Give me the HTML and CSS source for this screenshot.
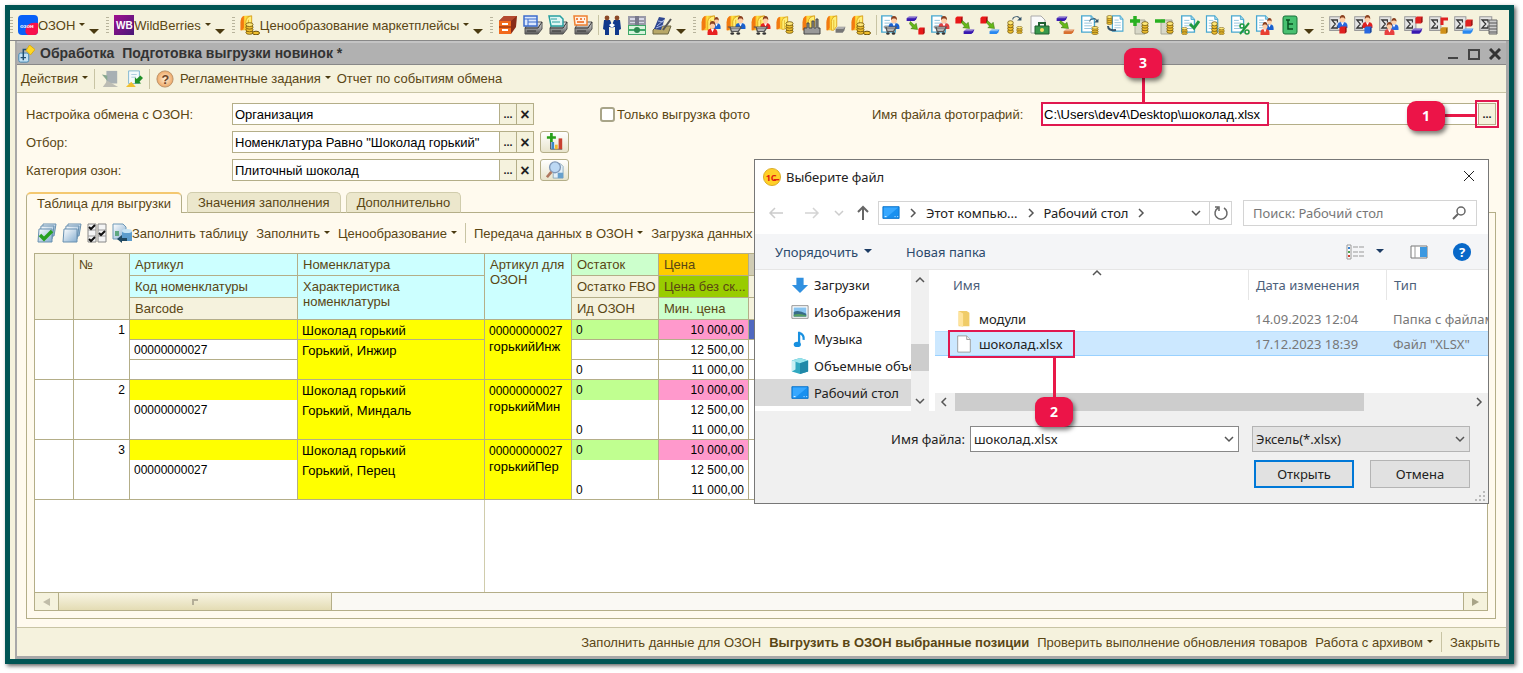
FILE: index.html
```
<!DOCTYPE html>
<html lang="ru">
<head>
	<meta charset="UTF-8">
	<title>Подготовка выгрузки новинок</title>
	<link rel="stylesheet" href="styles.css">
</head>
<body>

<!-- icon parts and icons, all on a 20x20 grid -->
<svg class="sprite" aria-hidden="true">
	<defs>
		<linearGradient id="gold" x2="1"><stop offset="0" stop-color="#f08010"/><stop offset=".45" stop-color="#ffe040"/><stop offset="1" stop-color="#c88808"/></linearGradient>
		<linearGradient id="metal" x2="0" y2="1"><stop offset="0" stop-color="#eeeeee"/><stop offset="1" stop-color="#555555"/></linearGradient>
		<linearGradient id="glass" x2="1" y2="1"><stop offset="0" stop-color="#ffffff"/><stop offset="1" stop-color="#86aed0"/></linearGradient>
		<linearGradient id="wb" x2="1" y2="1"><stop offset="0" stop-color="#a01090"/><stop offset="1" stop-color="#481878"/></linearGradient>
		<radialGradient id="orange"><stop offset="0" stop-color="#fff0d8"/><stop offset="1" stop-color="#eda765"/></radialGradient>
	</defs>
	<symbol id="box" viewBox="0 0 20 20" preserveAspectRatio="none"><path d="M1 9q0-7 6-8h11v13l-5 5H1z" fill="url(#gold)"/><path d="M1 9q0-6 5-8v15l-3 3H1z" fill="#f27a10"/><path d="M9 8q1-6 9-7v13l-5 5H9z" fill="#fff078" stroke="#d89810"/><path d="M13 6v12" stroke="#e0a818"/></symbol>
	<symbol id="man" viewBox="0 0 20 20" preserveAspectRatio="none"><path d="M1 20q-1-9 5-9h8q6 1 5 9z" fill="currentColor"/><path d="M7 11l3 5 3-5z" fill="#ffffff"/><circle cx="10" cy="6" r="5" fill="#ffcfa8"/><path d="M5 6q0-6 5-6t5 6l-3-2H8z" fill="#8a4020"/></symbol>
	<symbol id="cart" viewBox="0 0 20 20" preserveAspectRatio="none"><path d="M1 4h3l2 9h9l4-9z" fill="#dddddd" stroke="#555555" stroke-width="2"/><path d="M5 7h12M6 10h10" stroke="#555555"/><circle cx="7" cy="17" r="2.5" fill="#333333"/><circle cx="15" cy="17" r="2.5" fill="#333333"/></symbol>
	<symbol id="coins" viewBox="0 0 20 20" preserveAspectRatio="none"><g fill="#f0c030" stroke="#6a5008" stroke-width="1.4"><ellipse cx="10" cy="16" rx="8" ry="3"/><ellipse cx="10" cy="12" rx="8" ry="3"/><ellipse cx="10" cy="8" rx="8" ry="3"/><ellipse cx="10" cy="4" rx="8" ry="3" fill="#ffe878"/></g></symbol>
	<symbol id="doc" viewBox="0 0 20 20" preserveAspectRatio="none"><path d="M2 1h11l4 4v14H2z" fill="#ffffff" stroke="#48a8d0" stroke-width="1.6"/><path d="M13 1v4h4" fill="#9cd4ea" stroke="#48a8d0"/><path d="M5 6h6M5 9h9M5 12h9M5 15h9" stroke="#88bdd8"/></symbol>
	<symbol id="sigma" viewBox="0 0 20 20" preserveAspectRatio="none"><path d="M1 1h16v17H1z" fill="#e4e4e4" stroke="#999999" stroke-width="1.4"/><path d="M12 8V5H4l5 5-5 5h8v-3" fill="none" stroke="#333333" stroke-width="1.6"/></symbol>
	<symbol id="slab" viewBox="0 0 20 20" preserveAspectRatio="none"><path d="M1 9l4-5h14l-2 8-3 5H1z" fill="currentColor"/><path d="M1 9l4-5h14l-4 5z" fill="#ffffff" opacity=".4"/></symbol>
	<symbol id="cube" viewBox="0 0 20 20" preserveAspectRatio="none"><path d="M1 5l4-4h14v14l-4 4H1z" fill="currentColor"/><path d="M15 5l4-4v14l-4 4z" fill="#000000" opacity=".3"/></symbol>
	<symbol id="arrow" viewBox="0 0 20 20" preserveAspectRatio="none"><path d="M3 1l9 8 4-4 3 14-15-2 4-3-7-8z" fill="#66b818" stroke="#2c6808"/></symbol>
	<symbol id="turn" viewBox="0 0 20 20" preserveAspectRatio="none"><path d="M3 10q1-8 10-6" fill="none" stroke="#34536a" stroke-width="2"/><path d="M19 4v8h-8z" fill="#34536a"/><path d="M12 4q3 0 4 5" fill="none" stroke="#34536a" stroke-width="2"/></symbol>
	<symbol id="printer" viewBox="0 0 20 20"><path d="M2 13l4-6h13v7l-4 5H2z" fill="url(#metal)" stroke="#555555"/><path d="M2 13h13l4-6M4 16h9" fill="none" stroke="#333333"/></symbol>

	<symbol id="prices" viewBox="0 0 20 20"><use href="#box" width="13" height="16"/><use href="#coins" x="5" y="7" width="9" height="13"/><ellipse cx="16" cy="18" rx="3.5" ry="1.8" fill="#f0c030" stroke="#6a5008"/></symbol>
	<symbol id="cabinet" viewBox="0 0 20 20"><path d="M1 6l5-5h13l-1 11-5 7H1z" fill="#8a2c18"/><path d="M1 6h12v13H1z" fill="#f26a1c"/><path d="M1 6l5-5h13l-6 5z" fill="#b44a30"/><path d="M1 12h12" stroke="#802008"/><path d="M4 9h6M4 15h6" stroke="#ffffff" stroke-width="2"/></symbol>
	<symbol id="print-blue" viewBox="0 0 20 20"><use href="#printer"/><path d="M1 1h13v10H1z" fill="#dce8fc" stroke="#3c6ccc" stroke-width="1.5"/><path d="M1 4h13M5 4v7M5 7h9" stroke="#3c6ccc"/></symbol>
	<symbol id="print-teal" viewBox="0 0 20 20"><use href="#printer"/><path d="M1 1h11l3 3v7H3z" fill="#e0f6f4" stroke="#28a0a0" stroke-width="1.5"/><path d="M3 4h6M4 7h8" stroke="#28a0a0"/></symbol>
	<symbol id="print-orange" viewBox="0 0 20 20"><use href="#printer"/><path d="M1 1h13v9H2z" fill="#fff0e4" stroke="#ee8030" stroke-width="1.5"/><path d="M3 4h2m2 0h2m2 0h1M4 7h7" stroke="#ee6010" stroke-width="1.5"/></symbol>
	<symbol id="partners" viewBox="0 0 20 20"><path d="M2 5l6 0 2 5 2-5h6l1 9-2 1v5h-4v-8h-1l-2 1-2-1H7v8H3v-5l-2-1z" fill="#10388c"/><circle cx="5" cy="3" r="2.4" fill="#8c4a28"/><circle cx="15" cy="3" r="2.4" fill="#8c4a28"/><path d="M7 10l3-2 3 2-3 3z" fill="#ffffff"/></symbol>
	<symbol id="cash" viewBox="0 0 20 20"><path d="M1 1h18v9H1z" fill="#9a9aa8"/><path d="M3 3h14v2H3zM3 7h14v1H3z" fill="#d8d8e8"/><path d="M8 1h4v9H8z" fill="#78788c"/><path d="M1 10h18v10H1z" fill="#40a868"/><path d="M2 11h16v3H2zm0 5h16v3H2z" fill="#d8f4dc"/><circle cx="10" cy="15" r="3" fill="#2c8850"/></symbol>
	<symbol id="desk" viewBox="0 0 20 20"><path d="M1 15l4-4h14l-3 8H1z" fill="#b8a868" stroke="#6a6440"/><path d="M2 14L7 2l6 1-4 12z" fill="#304890"/><path d="M5 11l7-6M4 13l8-3M6 6l6 1" stroke="#a8b8e8"/><path d="M11 15l8-11" stroke="#555555" stroke-width="2"/></symbol>
	<symbol id="box-people" viewBox="0 0 20 20"><use href="#box" width="15" height="16"/><use href="#man" x="11" y="2" width="9" height="12" color="#1860d0"/><use href="#man" x="6" y="6" width="11" height="14" color="#e82020"/></symbol>
	<symbol id="box-cart-blue" viewBox="0 0 20 20"><use href="#box" width="15" height="16"/><use href="#man" x="9" y="1" width="11" height="13" color="#1860d0"/><use href="#cart" x="1" y="10" width="15" height="10"/></symbol>
	<symbol id="box-cart-red" viewBox="0 0 20 20"><use href="#box" width="15" height="16"/><use href="#man" x="9" y="1" width="11" height="13" color="#e82020"/><use href="#cart" x="2" y="10" width="15" height="10"/></symbol>
	<symbol id="box-coins" viewBox="0 0 20 20"><use href="#box" y="1" width="13" height="14"/><use href="#coins" x="9" y="6" width="9" height="13"/></symbol>
	<symbol id="box-factory" viewBox="0 0 20 20"><use href="#box" x="1" width="14" height="16"/><path d="M3 19v-6h3V8h2v5h3V6h2v7h2V4h2v9h2v6z" fill="#999999" stroke="#444444"/></symbol>
	<symbol id="box-slab" viewBox="0 0 20 20"><use href="#box" width="12" height="16"/><use href="#slab" x="9" y="10" width="11" height="9" color="#777777"/></symbol>
	<symbol id="doc-blue" viewBox="0 0 20 20"><use href="#doc" width="18" height="18"/><use href="#man" x="8" y="1" width="12" height="13" color="#1860d0"/><use href="#cart" x="3" y="10" width="14" height="10"/></symbol>
	<symbol id="doc-red" viewBox="0 0 20 20"><use href="#doc" width="18" height="18"/><use href="#man" x="8" y="1" width="12" height="13" color="#e04040"/><use href="#cart" x="3" y="10" width="14" height="10"/></symbol>
	<symbol id="move-out" viewBox="0 0 20 20"><use href="#slab" x="1" width="12" height="7" color="#3818b0"/><use href="#arrow" x="4" y="6" width="9" height="9"/><use href="#cube" x="13" y="12" width="7" height="8" color="#e81818"/></symbol>
	<symbol id="move-in" viewBox="0 0 20 20"><use href="#cube" y="1" width="8" height="8" color="#e81818"/><use href="#arrow" x="6" y="5" width="9" height="9"/><use href="#slab" x="8" y="13" width="12" height="7" color="#3818b0"/></symbol>
	<symbol id="move-in-blue" viewBox="0 0 20 20"><use href="#cube" y="1" width="8" height="8" color="#e81818"/><use href="#arrow" x="6" y="5" width="9" height="9"/><use href="#slab" x="9" y="13" width="11" height="7" color="#2888f0"/></symbol>
	<symbol id="coins-turn" viewBox="0 0 20 20"><use href="#coins" x="2" y="5" width="7" height="14"/><use href="#coins" x="11" y="11" width="7" height="8"/><use href="#turn" x="6" width="11" height="9"/></symbol>
	<symbol id="doc-bag" viewBox="0 0 20 20"><path d="M1 1h10l4 4v13H1z" fill="#fafafa" stroke="#aaaaaa"/><path d="M5 11h14v8H5z" fill="#38984c" stroke="#206030"/><path d="M9 11V8h6v3" fill="none" stroke="#206030" stroke-width="2"/><circle cx="12" cy="15" r="2" fill="#f8e060"/></symbol>
	<symbol id="move-brown" viewBox="0 0 20 20"><use href="#slab" x="1" width="12" height="7" color="#3818b0"/><use href="#arrow" x="4" y="5" width="10" height="9"/><use href="#slab" x="8" y="13" width="12" height="7" color="#d87030"/></symbol>
	<symbol id="doc-turn" viewBox="0 0 20 20"><use href="#doc" width="17" height="18"/><use href="#turn" x="8" y="2" width="11" height="9"/><use href="#coins" x="11" y="11" width="8" height="9"/></symbol>
	<symbol id="coins-doc" viewBox="0 0 20 20"><use href="#doc" x="6" width="14" height="17"/><use href="#coins" x="1" y="0" width="7" height="10"/><path d="M3 11q0 5 8 4" stroke="#34536a" stroke-width="2" fill="none"/></symbol>
	<symbol id="coins-plus" viewBox="0 0 20 20"><path d="M5 5h10v14H5z" fill="#d8d8c8" stroke="#a8a898"/><use href="#coins" x="11" y="6" width="8" height="13"/><path d="M5 1v10M0 6h10" stroke="#28b020" stroke-width="3.5"/></symbol>
	<symbol id="coins-minus" viewBox="0 0 20 20"><path d="M6 5h11v14H6z" fill="#d8d8c8" stroke="#a8a898"/><use href="#coins" x="11" y="6" width="8" height="13"/><path d="M0 6h10" stroke="#28b020" stroke-width="3.5"/></symbol>
	<symbol id="doc-check" viewBox="0 0 20 20"><use href="#doc" width="17" height="18"/><use href="#coins" x="1" y="12" width="7" height="8"/><path d="M10 9l4 4 5-7" fill="none" stroke="#209840" stroke-width="3"/></symbol>
	<symbol id="doc-coins" viewBox="0 0 20 20"><use href="#doc" width="15" height="18"/><use href="#coins" x="6" y="6" width="7" height="14"/><use href="#coins" x="13" y="12" width="7" height="8"/></symbol>
	<symbol id="doc-percent" viewBox="0 0 20 20"><use href="#doc" width="16" height="18"/><path d="M10 19l9-11" stroke="#209840" stroke-width="2"/><circle cx="12" cy="11" r="2" fill="none" stroke="#209840" stroke-width="1.5"/><circle cx="17" cy="17" r="2" fill="none" stroke="#209840" stroke-width="1.5"/></symbol>
	<symbol id="doc-people" viewBox="0 0 20 20"><use href="#doc" width="16" height="17"/><use href="#man" x="10" y="3" width="9" height="12" color="#1860d0"/><use href="#man" x="5" y="7" width="10" height="13" color="#e84030"/></symbol>
	<symbol id="tree" viewBox="0 0 20 20"><rect x="3" y="1" width="14" height="18" rx="2" fill="#48c070" stroke="#187038"/><path d="M6 5h4M8 5v9h5M8 9h5" stroke="#085020" stroke-width="1.5" fill="none"/></symbol>
	<symbol id="sum-blue" viewBox="0 0 20 20"><use href="#sigma" y="1" width="14" height="16"/><use href="#man" x="8" y="0" width="11" height="13" color="#2868e0"/><use href="#cube" x="10" y="11" width="8" height="8" color="#e02020"/></symbol>
	<symbol id="sum-red" viewBox="0 0 20 20"><use href="#sigma" y="1" width="14" height="16"/><use href="#man" x="8" y="0" width="11" height="13" color="#e02020"/><use href="#cube" x="10" y="11" width="8" height="8" color="#2868e0"/></symbol>
	<symbol id="sum-people" viewBox="0 0 20 20"><use href="#sigma" y="1" width="14" height="16"/><use href="#man" x="10" y="3" width="10" height="12" color="#2868e0"/><use href="#man" x="5" y="7" width="11" height="13" color="#e84040"/></symbol>
	<symbol id="sum-out" viewBox="0 0 20 20"><use href="#sigma" y="1" width="14" height="16"/><use href="#cube" x="11" y="1" width="8" height="8" color="#e02020"/><use href="#slab" x="7" y="12" width="12" height="8" color="#3818b0"/></symbol>
	<symbol id="sum-gold" viewBox="0 0 20 20"><use href="#sigma" y="1" width="14" height="16"/><path d="M13 10V4h6" stroke="#e02020" stroke-width="3" fill="none"/><use href="#cube" x="11" y="12" width="8" height="7" color="#d09018"/></symbol>
	<symbol id="sum-in" viewBox="0 0 20 20"><use href="#sigma" y="1" width="14" height="16"/><use href="#cube" x="11" y="4" width="8" height="8" color="#e02020"/><use href="#slab" x="8" y="12" width="12" height="8" color="#2888f0"/></symbol>
	<symbol id="sum-table" viewBox="0 0 20 20"><use href="#sigma" y="1" width="15" height="16"/><path d="M10 5h8v14h-8z" fill="#cccccc" stroke="#666666"/><path d="M10 8h8m-8 3h8m-8 3h8m-8 3h8" stroke="#555555"/></symbol>

	<symbol id="process" viewBox="0 0 20 20"><rect x="2" y="9" width="11" height="10" rx="2" fill="#c4e2f4" stroke="#3c86b4"/><path d="M7 17V5h5M4 14h6" fill="none" stroke="#234f70" stroke-width="1.6"/><path d="M14 0l6 5-5 6-5-5z" fill="#ffd824" stroke="#d8a810"/></symbol>
	<symbol id="load" viewBox="0 0 20 20"><path d="M6 1h12v14H6z" fill="#a8b0b4"/><path d="M2 19l5-7 12 7z" fill="#bcbcb4"/><path d="M1 5l6 1v6z" fill="#88a890"/></symbol>
	<symbol id="save" viewBox="0 0 20 20"><path d="M4 1h12v14H4z" fill="#f4fafc" stroke="#7cb4d0"/><path d="M7 5h6M7 8h5" stroke="#a8c8dc"/><path d="M1 19l6-6 5 6z" fill="#f0c030"/><path d="M17 6l-4 4-2-2v7h7l-2-2 4-4z" fill="#209028"/></symbol>
	<symbol id="filter-add" viewBox="0 0 20 20"><path d="M5 18V8M5 18h13" stroke="#555555"/><path d="M6 10h3v8H6z" fill="#3c88c8"/><path d="M10 13h3v5h-3z" fill="#f0b830"/><path d="M14 6h4v12h-4z" fill="#c84030"/><path d="M6 0v10M1 5h10" stroke="#28a018" stroke-width="3"/></symbol>
	<symbol id="find" viewBox="0 0 20 20"><path d="M8 3h8l3 3v13H8z" fill="#e4f0f8" stroke="#88a8bc"/><path d="M13 13h6v6h-6z" fill="#68a0cc"/><circle cx="10" cy="7" r="6" fill="#bcd8f4" stroke="#8098b8" stroke-width="1.5"/><path d="M6 12l-5 6" stroke="#b07860" stroke-width="3"/></symbol>
	<symbol id="stack" viewBox="0 0 20 20"><g fill="url(#glass)" stroke="#6890b0"><path d="M6 1h13l-2 12H5z"/><path d="M4 3h13l-2 13H3z"/><path d="M2 6h13v13H1z"/></g></symbol>
	<symbol id="stack-check" viewBox="0 0 20 20"><use href="#stack"/><path d="M3 12l4 4 8-8" fill="none" stroke="#28a020" stroke-width="3.5"/></symbol>
	<symbol id="invert" viewBox="0 0 20 20"><path d="M1 1h8v18H1zm10 0h8v18h-8z" fill="#f4f4f4" stroke="#888888"/><path d="M1 7h8M1 13h8M11 7h8M11 13h8" stroke="#999999"/><path d="M2 4l2 2 4-4M2 16l2 2 4-4M12 10l2 2 4-4" fill="none" stroke="#111111" stroke-width="2"/></symbol>
	<symbol id="fill" viewBox="0 0 20 20"><path d="M1 1h10l3 3v12H1z" fill="url(#glass)" stroke="#6c98b8"/><path d="M10 8h10v10H10z" fill="#5c9ccc"/><ellipse cx="15" cy="8" rx="5" ry="2" fill="#c8e4f4"/><path d="M3 8h4v5H3" fill="#60a880"/><path d="M5 16l5-4v3h5v3h-5v2z" fill="#204860"/></symbol>

	<symbol id="desktop" viewBox="0 0 20 20"><path d="M1 3h18v13H1z" fill="#1890f0" stroke="#0870c8"/><path d="M2 4h16L5 15H2z" fill="#38a8ff"/><path d="M3 14h2m9 0h1m2 0h1" stroke="#ffffff"/></symbol>
	<symbol id="download" viewBox="0 0 20 20"><path d="M6 2h8v8h5l-9 9-9-9h5z" fill="#3090e0"/></symbol>
	<symbol id="picture" viewBox="0 0 20 20"><path d="M1 3h18v14H1z" fill="#ffffff" stroke="#888888"/><path d="M3 5h14v10H3z" fill="#88c4f0"/><path d="M3 10q5-3 14 2v3H3z" fill="#386c88"/><path d="M3 13q7-2 14 1v1H3z" fill="#58a060"/></symbol>
	<symbol id="note" viewBox="0 0 20 20"><path d="M9 2v13M9 3q6 2 5 8" fill="none" stroke="#1890e0" stroke-width="2.5"/><ellipse cx="7" cy="16" rx="4" ry="3" fill="#1890e0"/></symbol>
	<symbol id="objects" viewBox="0 0 20 20"><path d="M1 4l9-3 9 3v12l-9 3-9-3z" fill="#30a8c0"/><path d="M1 4l9-3 9 3-9 3z" fill="#98e4ec"/><path d="M1 4l4 1v9l-4 2z" fill="#c8f0f4"/><path d="M10 7l9-3v12l-9 3z" fill="#2088a8"/></symbol>
	<symbol id="folder" viewBox="0 0 20 20"><path d="M4 1h9l3 2v15H4z" fill="#f0cc68"/><path d="M4 1l5 3v15l-5-2z" fill="#ffe49c"/></symbol>
	<symbol id="file" viewBox="0 0 20 20"><path d="M3 1h10l4 4v14H3z" fill="#ffffff" stroke="#999999"/><path d="M13 1v4h4" fill="#eeeeee" stroke="#999999"/></symbol>
	<symbol id="chevron" viewBox="0 0 10 10"><path d="M1 3l4 4 4-4" fill="none" stroke="currentColor" stroke-width="1.5"/></symbol>
</svg>

<div class="frame">
	<div class="app-bar">
		<span class="grip"></span>
		<button class="menu"><svg class="icon" viewBox="0 0 20 20"><rect width="20" height="20" rx="4" fill="#0860f8"/><path d="M8 13q2-6 12-5v8q0 4-4 4h-6q-4-2-2-7z" fill="#f8104c"/><text x="2" y="13" font-size="6" font-weight="bold" fill="#ffffff">озон</text></svg>ОЗОН<i class="caret"></i></button><i class="more"></i>
		<span class="grip"></span>
		<button class="menu"><svg class="icon" viewBox="0 0 20 20"><rect width="20" height="20" fill="url(#wb)"/><text x="2" y="14" font-size="10" font-weight="bold" fill="#ffffff">WB</text></svg>WildBerries<i class="caret"></i></button><i class="more"></i>
		<span class="grip"></span>
		<button class="menu"><svg class="icon"><use href="#prices"/></svg>Ценообразование маркетплейсы<i class="caret"></i></button><i class="more"></i>
		<span class="grip"></span>
		<div class="tools">
			<button title="Справочники"><svg class="icon"><use href="#cabinet"/></svg></button>
			<button title="Печать"><svg class="icon"><use href="#print-blue"/></svg></button>
			<button title="Печать"><svg class="icon"><use href="#print-teal"/></svg></button>
			<button title="Печать"><svg class="icon"><use href="#print-orange"/></svg></button>
			<span class="split"></span>
			<button title="Контрагенты"><svg class="icon"><use href="#partners"/></svg></button>
			<button title="Касса"><svg class="icon"><use href="#cash"/></svg></button>
			<button title="Рабочий стол"><svg class="icon"><use href="#desk"/></svg></button>
		</div>
		<i class="more"></i>
		<span class="grip"></span>
		<div class="tools">
			<button title="Клиенты"><svg class="icon"><use href="#box-people"/></svg></button>
			<button title="Продажи"><svg class="icon"><use href="#box-cart-blue"/></svg></button>
			<button title="Закупки"><svg class="icon"><use href="#box-cart-red"/></svg></button>
			<button title="Цены"><svg class="icon"><use href="#box-coins"/></svg></button>
			<button title="Производство"><svg class="icon"><use href="#box-factory"/></svg></button>
			<button title="Склад"><svg class="icon"><use href="#box-slab"/></svg></button>
			<button title="Ценообразование"><svg class="icon"><use href="#prices"/></svg></button>
			<span class="split"></span>
			<button title="Заказ покупателя"><svg class="icon"><use href="#doc-blue"/></svg></button>
			<button title="Реализация"><svg class="icon"><use href="#move-out"/></svg></button>
			<button title="Заказ поставщику"><svg class="icon"><use href="#doc-red"/></svg></button>
			<button title="Поступление"><svg class="icon"><use href="#move-in"/></svg></button>
			<button title="Поступление"><svg class="icon"><use href="#move-in-blue"/></svg></button>
			<button title="Обмен валют"><svg class="icon"><use href="#coins-turn"/></svg></button>
			<button title="Розница"><svg class="icon"><use href="#doc-bag"/></svg></button>
			<button title="Перемещение"><svg class="icon"><use href="#move-brown"/></svg></button>
			<button title="Платеж"><svg class="icon"><use href="#doc-turn"/></svg></button>
			<button title="Возврат"><svg class="icon"><use href="#coins-doc"/></svg></button>
			<button title="Приход"><svg class="icon"><use href="#coins-plus"/></svg></button>
			<button title="Расход"><svg class="icon"><use href="#coins-minus"/></svg></button>
			<button title="Проверка"><svg class="icon"><use href="#doc-check"/></svg></button>
			<button title="Оплата"><svg class="icon"><use href="#doc-coins"/></svg></button>
			<button title="Скидки"><svg class="icon"><use href="#doc-percent"/></svg></button>
			<button title="Взаиморасчеты"><svg class="icon"><use href="#doc-people"/></svg></button>
			<button title="Структура"><svg class="icon"><use href="#tree"/></svg></button>
		</div>
		<i class="more"></i>
		<span class="grip"></span>
		<div class="tools">
			<button title="Отчет"><svg class="icon"><use href="#sum-blue"/></svg></button>
			<button title="Отчет"><svg class="icon"><use href="#sum-red"/></svg></button>
			<button title="Отчет"><svg class="icon"><use href="#sum-people"/></svg></button>
			<button title="Отчет"><svg class="icon"><use href="#sum-out"/></svg></button>
			<button title="Отчет"><svg class="icon"><use href="#sum-gold"/></svg></button>
			<button title="Отчет"><svg class="icon"><use href="#sum-in"/></svg></button>
			<button title="Отчет"><svg class="icon"><use href="#sum-table"/></svg></button>
		</div>
	</div>

	<div class="window">
		<div class="window-title">
			<svg class="icon small"><use href="#process"/></svg>
			<h1>Обработка&nbsp; Подготовка выгрузки новинок *</h1>
			<button title="Свернуть"><svg width="12" height="12"><path d="M1 10h10" stroke="#444444" stroke-width="2"/></svg></button>
			<button title="Развернуть"><svg width="12" height="12"><path d="M1 2h10v9H1z" fill="none" stroke="#444444" stroke-width="2"/></svg></button>
			<button title="Закрыть"><svg width="12" height="12"><path d="M1 1l10 10M11 1L1 11" stroke="#333333" stroke-width="3"/></svg></button>
		</div>

		<div class="actions">
			<button class="menu">Действия<i class="caret"></i></button>
			<span class="split"></span>
			<button class="menu" title="Загрузить"><svg class="icon small"><use href="#load"/></svg></button>
			<button class="menu" title="Сохранить"><svg class="icon small"><use href="#save"/></svg></button>
			<span class="split"></span>
			<button class="menu" title="Справка"><svg class="icon small" viewBox="0 0 20 20"><circle cx="10" cy="10" r="9" fill="url(#orange)" stroke="#b89068"/><text x="6" y="15" font-size="14" font-weight="bold" fill="#6c4428">?</text></svg></button>
			<button class="menu">Регламентные задания<i class="caret"></i></button>
			<button class="menu">Отчет по событиям обмена</button>
		</div>

		<div class="form">
			<div class="form-row">
				<label class="caption" for="exchange">Настройка обмена с ОЗОН:</label>
				<div class="field">
					<input type="text" id="exchange" value="Организация"><button>...</button><button class="clear">×</button>
				</div>
				<div class="only-photo"><input type="checkbox" id="photo"><label for="photo">Только выгрузка фото</label></div>
				<label class="file-caption" for="photo-file">Имя файла фотографий:</label>
				<div class="field file-field">
					<input type="text" id="photo-file" value="C:\Users\dev4\Desktop\шоколад.xlsx"><button>...</button>
					<span class="mark mark-path"></span><span class="stem stem-path"></span><span class="badge badge-path">3</span>
					<span class="mark mark-pick"></span><span class="stem stem-pick"></span><span class="badge badge-pick">1</span>
				</div>
			</div>
			<div class="form-row">
				<label class="caption" for="filter">Отбор:</label>
				<div class="field">
					<input type="text" id="filter" value="Номенклатура Равно &quot;Шоколад горький&quot;"><button>...</button><button class="clear">×</button>
				</div>
				<button class="picture-button" title="Добавить отбор"><svg class="icon small"><use href="#filter-add"/></svg></button>
			</div>
			<div class="form-row">
				<label class="caption" for="category">Категория озон:</label>
				<div class="field">
					<input type="text" id="category" value="Плиточный шоколад"><button>...</button><button class="clear">×</button>
				</div>
				<button class="picture-button" title="Найти"><svg class="icon small"><use href="#find"/></svg></button>
			</div>

			<div class="tabs">
				<button class="active">Таблица для выгрузки</button>
				<button>Значения заполнения</button>
				<button>Дополнительно</button>
			</div>

			<div class="panel">
				<div class="table-bar">
					<button class="menu" title="Отметить все"><svg class="icon"><use href="#stack-check"/></svg></button>
					<button class="menu" title="Снять отметки"><svg class="icon"><use href="#stack"/></svg></button>
					<button class="menu" title="Инвертировать"><svg class="icon"><use href="#invert"/></svg></button>
					<button class="menu"><svg class="icon"><use href="#fill"/></svg>Заполнить таблицу</button>
					<button class="menu">Заполнить<i class="caret"></i></button>
					<button class="menu">Ценообразование<i class="caret"></i></button>
					<span class="split"></span>
					<button class="menu">Передача данных в ОЗОН<i class="caret"></i></button>
					<button class="menu">Загрузка данных из ОЗОН</button>
				</div>

				<div class="grid">
					<table class="goods">
						<colgroup><col class="c-mark"><col class="c-num"><col class="c-code"><col class="c-name"><col class="c-ozon"><col class="c-rest"><col class="c-price"><col></colgroup>
						<thead>
							<tr>
								<th rowspan="3"></th>
								<th rowspan="3">№</th>
								<th class="cyan">Артикул</th>
								<th class="cyan">Номенклатура</th>
								<th class="cyan" rowspan="3">Артикул для ОЗОН</th>
								<th class="mint">Остаток</th>
								<th class="amber">Цена</th>
								<th class="current"></th>
							</tr>
							<tr>
								<th class="cyan">Код номенклатуры</th>
								<th class="cyan" rowspan="2">Характеристика номенклатуры</th>
								<th>Остатко FBO</th>
								<th class="olive">Цена без ск...</th>
								<th></th>
							</tr>
							<tr>
								<th>Barcode</th>
								<th>Ид ОЗОН</th>
								<th class="mint">Мин. цена</th>
								<th></th>
							</tr>
						</thead>
						<tbody class="lined">
							<tr><td rowspan="3"></td><td class="num" rowspan="3">1</td><td class="yellow"></td><td class="yellow">Шоколад горький</td><td class="yellow" rowspan="3"><span class="digits">00000000027</span><br>горькийИнж</td><td class="lime digits">0</td><td class="pink num">10 000,00</td><td class="selected"></td></tr>
							<tr><td class="digits">00000000027</td><td class="yellow" rowspan="2">Горький, Инжир</td><td></td><td class="num">12 500,00</td><td></td></tr>
							<tr><td></td><td class="digits">0</td><td class="num">11 000,00</td><td></td></tr>
						</tbody>
						<tbody>
							<tr><td rowspan="3"></td><td class="num" rowspan="3">2</td><td class="yellow"></td><td class="yellow">Шоколад горький</td><td class="yellow" rowspan="3"><span class="digits">00000000027</span><br>горькийМин</td><td class="lime digits">0</td><td class="pink num">10 000,00</td><td></td></tr>
							<tr><td class="digits">00000000027</td><td class="yellow" rowspan="2">Горький, Миндаль</td><td></td><td class="num">12 500,00</td><td></td></tr>
							<tr><td></td><td class="digits">0</td><td class="num">11 000,00</td><td></td></tr>
						</tbody>
						<tbody>
							<tr><td rowspan="3"></td><td class="num" rowspan="3">3</td><td class="yellow"></td><td class="yellow">Шоколад горький</td><td class="yellow" rowspan="3"><span class="digits">00000000027</span><br>горькийПер</td><td class="lime digits">0</td><td class="pink num">10 000,00</td><td></td></tr>
							<tr><td class="digits">00000000027</td><td class="yellow" rowspan="2">Горький, Перец</td><td></td><td class="num">12 500,00</td><td></td></tr>
							<tr><td></td><td class="digits">0</td><td class="num">11 000,00</td><td></td></tr>
						</tbody>
					</table>
					<div class="blank"><div class="frozen"></div></div>
					<div class="scroll">
						<button class="left" title="Влево"></button>
						<div class="thumb"></div>
						<button class="right" title="Вправо"></button>
					</div>
				</div>
			</div>

			<div class="dialog" role="dialog" aria-label="Выберите файл">
				<div class="dialog-title">
					<svg class="icon small" viewBox="0 0 20 20"><circle cx="10" cy="10" r="9.5" fill="#ffd028" stroke="#d8a820"/><text x="3" y="14" font-size="10" font-weight="bold" fill="#e02010">1С</text><path d="M12 13h6" stroke="#e02010" stroke-width="1.5"/></svg>
					<h2>Выберите файл</h2>
					<button title="Закрыть"><svg width="12" height="12"><path d="M1 1l10 10M11 1L1 11" stroke="#222222"/></svg></button>
				</div>
				<div class="dialog-nav">
					<button disabled title="Назад"><svg width="16" height="12"><path d="M15 6H2M7 1L2 6l5 5" fill="none" stroke="#cccccc" stroke-width="1.5"/></svg></button>
					<button disabled title="Вперед"><svg width="16" height="12"><path d="M1 6h13M9 1l5 5-5 5" fill="none" stroke="#d4d4d4" stroke-width="1.5"/></svg></button>
					<button disabled title="Журнал"><svg class="chev pale"><use href="#chevron"/></svg></button>
					<button title="Вверх"><svg width="12" height="16"><path d="M6 15V2M1 7l5-5 5 5" fill="none" stroke="#666666" stroke-width="2"/></svg></button>
					<div class="address">
						<svg class="icon small"><use href="#desktop"/></svg>
						<svg class="chev east"><use href="#chevron"/></svg>
						<a href="#">Этот компью...</a>
						<svg class="chev east"><use href="#chevron"/></svg>
						<a href="#">Рабочий стол</a>
						<svg class="chev east"><use href="#chevron"/></svg>
						<button class="history" title="Предыдущие расположения"><svg class="chev"><use href="#chevron"/></svg></button>
						<button class="refresh" title="Обновить"><svg width="16" height="16"><path d="M11 3a6 6 0 1 1-6 0M2 2h4v4" fill="none" stroke="#666666" stroke-width="1.5"/></svg></button>
					</div>
					<div class="search">
						<input type="search" placeholder="Поиск: Рабочий стол" aria-label="Поиск">
						<svg width="14" height="14"><circle cx="9" cy="5" r="4" fill="none" stroke="#666666" stroke-width="1.5"/><path d="M6 8l-5 5" stroke="#666666" stroke-width="2"/></svg>
					</div>
				</div>
				<div class="dialog-bar">
					<button>Упорядочить<i class="caret"></i></button>
					<button class="new-folder">Новая папка</button>
					<button class="view" title="Вид"><svg width="18" height="16"><path d="M1 1h4v14H1z" fill="#ffffff" stroke="#999999"/><path d="M2 4h2" stroke="#3880d0" stroke-width="2"/><path d="M2 8h2" stroke="#50a050" stroke-width="2"/><path d="M2 12h2" stroke="#d04030" stroke-width="2"/><path d="M7 3h5m1 0h5M7 8h5m1 0h5M7 12h5m1 0h5" stroke="#999999"/></svg><i class="caret"></i></button>
					<button title="Область просмотра"><svg width="18" height="14"><path d="M1 1h16v12H1z" fill="#ffffff" stroke="#777777"/><path d="M5 1v12" stroke="#999999"/><path d="M10 2h7v10h-7z" fill="#3c98e0"/></svg></button>
					<button class="round-help" title="Справка">?</button>
				</div>
				<div class="dialog-body">
					<ul class="places">
						<li><svg class="icon small"><use href="#download"/></svg>Загрузки</li>
						<li><svg class="icon small"><use href="#picture"/></svg>Изображения</li>
						<li><svg class="icon small"><use href="#note"/></svg>Музыка</li>
						<li><svg class="icon small"><use href="#objects"/></svg>Объемные объекты</li>
						<li class="active"><svg class="icon small"><use href="#desktop"/></svg>Рабочий стол</li>
					</ul>
					<div class="places-scroll">
						<svg class="chev north"><use href="#chevron"/></svg>
						<span class="bar"></span>
						<svg class="chev"><use href="#chevron"/></svg>
					</div>
					<div class="files">
						<svg class="chev north sort"><use href="#chevron"/></svg>
						<table>
							<thead><tr><th>Имя</th><th class="date">Дата изменения</th><th class="type">Тип</th></tr></thead>
							<tbody>
								<tr><td><span class="name"><svg class="icon small"><use href="#folder"/></svg>модули</span></td><td>14.09.2023 12:04</td><td>Папка с файлами</td></tr>
								<tr class="picked"><td><span class="name"><svg class="icon small"><use href="#file"/></svg>шоколад.xlsx</span><span class="mark mark-row"></span><span class="stem stem-row"></span><span class="badge badge-row">2</span></td><td>17.12.2023 18:39</td><td>Файл "XLSX"</td></tr>
							</tbody>
						</table>
						<div class="files-scroll">
							<svg class="chev west"><use href="#chevron"/></svg>
							<span class="bar"></span>
							<svg class="chev east"><use href="#chevron"/></svg>
						</div>
					</div>
				</div>
				<div class="dialog-foot">
					<div class="name-row">
						<label for="file-name">Имя файла:</label>
						<div class="combo"><input type="text" id="file-name" value="шоколад.xlsx"><svg class="chev"><use href="#chevron"/></svg></div>
						<div class="combo type-combo"><select aria-label="Тип файла"><option>Эксель(*.xlsx)</option></select><svg class="chev"><use href="#chevron"/></svg></div>
					</div>
					<div class="button-row">
						<button class="default">Открыть</button>
						<button>Отмена</button>
					</div>
					<svg class="resize" width="12" height="12"><path d="M9 1h2v2H9zM5 5h2v2H5zm4 0h2v2H9zM1 9h2v2H1zm4 0h2v2H5zm4 0h2v2H9z" fill="#bbbbbb"/></svg>
				</div>
			</div>
		</div>

		<div class="footer">
			<button class="menu">Заполнить данные для ОЗОН</button>
			<button class="menu strong">Выгрузить в ОЗОН выбранные позиции</button>
			<button class="menu">Проверить выполнение обновления товаров</button>
			<button class="menu">Работа с архивом<i class="caret"></i></button>
			<span class="split"></span>
			<button class="menu">Закрыть</button>
		</div>
	</div>
</div>

</body>
</html>
```
FILE: styles.css
```
* {
	box-sizing: border-box;
}

body {
	display: flex;
	min-height: 100vh;
	margin: 0;
	padding: 5px 9px 9px 5px;
	background: #ffffff;
	color: #5a4614;
	font: 13px/15px "Liberation Sans", Arial, sans-serif;
}

button, input, select {
	margin: 0;
	padding: 0;
	border: 0;
	background: none;
	color: inherit;
	font: inherit;
	white-space: nowrap;
}

h1, h2 {
	margin: 0;
	font-size: 14px;
}

.sprite {
	position: absolute;
	width: 0;
	height: 0;
}

.icon {
	flex: none;
	display: block;
	width: 20px;
	height: 20px;
}

.icon.small {
	width: 18px;
	height: 18px;
}

.frame {
	flex: 1;
	display: flex;
	flex-direction: column;
	min-width: 0;
	border: 5px solid #005555;
	background: #f5f2dd;
	box-shadow: 2px 2px 4px rgba(0,0,0,0.6);
}

/* main toolbar */

.app-bar {
	display: flex;
	align-items: center;
	height: 31px;
	border-bottom: 1px solid #888888;
	overflow: hidden;
}

.menu {
	display: flex;
	align-items: center;
	flex: none;
}

.caret {
	flex: none;
	margin: 0 0 2px 4px;
	border: 3px solid transparent;
	border-top-color: #4a3a10;
	border-bottom: 0;
}

.more {
	flex: none;
	margin: 13px 7px 0 4px;
	border: 5px solid transparent;
	border-top-color: #4a3a10;
	border-bottom: 0;
}

.grip {
	flex: none;
	width: 3px;
	height: 17px;
	margin: 0 5px 0 0;
	background: repeating-linear-gradient(#b8b49c 0 1px, transparent 1px 3px);
}

.tools {
	display: flex;
	align-items: center;
	gap: 5px;
}

.split {
	flex: none;
	width: 1px;
	height: 20px;
	background: #c8c4a4;
}

.tools .split {
	margin-right: -2px;
}

/* document window */

.window {
	flex: 1;
	display: flex;
	flex-direction: column;
	margin-left: 5px;
	border: solid #a8a8a8;
	border-width: 0 3px 3px 2px;
}

.window-title {
	display: flex;
	align-items: center;
	gap: 9px;
	height: 24px;
	padding-right: 5px;
	border-top: 2px solid #c4c4c4;
	border-bottom: 1px solid #888888;
	background: #b1b1b1;
	color: #333333;
}

.window-title h1 {
	flex: 1;
	margin-left: -4px;
}

.window-title button {
	display: flex;
}

.actions {
	display: flex;
	align-items: center;
	gap: 6px;
	height: 28px;
	padding-left: 4px;
	border-bottom: 1px solid #c8c4a4;
}

.form {
	position: relative;
	flex: 1;
	display: flex;
	flex-direction: column;
	gap: 6px;
	padding: 10px 10px 8px 9px;
	background: #fffaee;
}

.form-row {
	display: flex;
	align-items: center;
	height: 22px;
}

.caption {
	flex: none;
	width: 206px;
}

.field {
	flex: none;
	display: flex;
	width: 302px;
	height: 22px;
	border: 1px solid #b4ae88;
	background: #ffffff;
	color: #000000;
}

.field input {
	flex: 1;
	min-width: 0;
	padding: 0 2px;
}

.field button {
	flex: none;
	width: 17px;
	border-left: 1px solid #b4ae88;
	background: #f5f2dd;
	color: #222222;
	font-size: 11px;
	font-weight: bold;
}

.field .clear {
	font-size: 16px;
}

.file-field {
	position: relative;
	flex: 1;
}

.only-photo {
	display: flex;
	align-items: center;
	gap: 2px;
	width: 272px;
	margin-left: 66px;
}

.only-photo input {
	appearance: none;
	width: 15px;
	height: 15px;
	border: 2px solid #a8a488;
	border-radius: 3px;
	background: #ffffff;
}

.file-caption {
	width: 169px;
}

.picture-button {
	display: flex;
	align-items: center;
	justify-content: center;
	width: 29px;
	height: 22px;
	margin-left: 6px;
	border: 1px solid #b4ae88;
	border-radius: 3px;
	background: linear-gradient(#ffffff, #e8e4cc);
}

.tabs {
	display: flex;
	gap: 5px;
	height: 21px;
	margin-top: 5px;
	margin-bottom: -7px;
	z-index: 1;
}

.tabs button {
	padding: 0 10px;
	border: 1px solid #d0ccac;
	border-bottom-color: #b4ae88;
	border-radius: 5px 5px 0 0;
	background: #ece7cc;
}

.tabs .active {
	border-color: #b4ae88;
	border-top: 2px solid #f4c870;
	border-bottom: 0;
	background: #fffaee;
}

.panel {
	flex: 1;
	display: flex;
	flex-direction: column;
	padding: 0 7px 7px;
	border: 1px solid #b4ae88;
}

.table-bar {
	display: flex;
	align-items: center;
	gap: 8px;
	height: 40px;
	padding-left: 3px;
	overflow: hidden;
}

.table-bar .menu:nth-child(-n+3) .icon {
	margin-right: -3px;
}

.grid {
	flex: 1;
	display: flex;
	flex-direction: column;
	border: 1px solid #b4ae88;
	background: #ffffff;
}

/* goods table: one record takes three lines */

.goods {
	width: 100%;
	table-layout: fixed;
	border-spacing: 0;
}

.c-mark { width: 39px; }
.c-num { width: 56px; }
.c-code { width: 168px; }
.c-name { width: 187px; }
.c-ozon, .c-rest { width: 87px; }
.c-price { width: 90px; }

.goods th, .goods td {
	overflow: hidden;
	border-right: 1px solid #b4ae88;
	vertical-align: top;
}

.goods th {
	height: 22px;
	padding: 3px 0 3px 5px;
	border-bottom: 1px solid #b4ae88;
	background: #f5f2dd;
	font-weight: normal;
	text-align: left;
}

.goods td {
	height: 20px;
	padding: 3px 4px 1px 4px;
	color: #000000;
}

.lined td, .goods tr:last-child td, .goods td[rowspan="2"], .goods td[rowspan="3"] {
	border-bottom: 1px solid #b4ae88;
}

.goods .cyan { background: #ccffff; }
.goods .mint { background: #ccffcc; }
.goods .amber { background: #ffcc00; }
.goods .olive { background: #99cc00; }
.goods .current { background: #d0ccb4; }
.goods .yellow { background: #ffff00; }
.goods .lime { background: #c0ff90; }
.goods .pink { background: #ff99cc; }
.goods .selected { background: #5068c0; }

.goods .digits, .goods .num {
	font-size: 12px;
}

.goods .num {
	text-align: right;
}

.blank {
	flex: 1;
	display: flex;
}

.frozen {
	width: 450px;
	border-right: 1px solid #d0ccac;
}

.scroll {
	display: flex;
	height: 18px;
	border-top: 1px solid #b4ae88;
	background: #faf9f4;
}

.scroll button {
	display: flex;
	align-items: center;
	justify-content: center;
	width: 24px;
	border-right: 1px solid #b4ae88;
	background: #f5f2dd;
}

.scroll button::before {
	content: "";
	border: 4px solid transparent;
	border-right: 7px solid #c0bca8;
	border-left: 0;
}

.scroll .right {
	margin-left: auto;
	border-right: 0;
	border-left: 1px solid #b4ae88;
}

.scroll .right::before {
	border-right: 0;
	border-left: 7px solid #a8a488;
}

.thumb {
	width: 273px;
	border-right: 1px solid #b4ae88;
	background: linear-gradient(#f8f5e4, #e4dcb4);
}

.thumb::before {
	content: "";
	display: block;
	width: 4px;
	height: 4px;
	margin: 6px auto;
	border: solid #b4ae98;
	border-width: 2px 0 0 2px;
}

.footer {
	display: flex;
	align-items: center;
	justify-content: flex-end;
	gap: 8px;
	height: 29px;
	padding-right: 6px;
	border-top: 1px solid #c8c4a4;
}

.strong {
	font-weight: bold;
}

/* file dialog */

.dialog {
	position: absolute;
	z-index: 2;
	top: 66px;
	right: 17px;
	width: 735px;
	border: 1px solid #777777;
	background: #ffffff;
	color: #222222;
	font: 13px/18px "Noto Sans", "Open Sans", sans-serif;
}

.dialog .chev {
	flex: none;
	display: block;
	width: 10px;
	height: 10px;
	color: #555555;
}

.dialog .pale { color: #cccccc; }
.dialog .north { transform: rotate(180deg); }
.dialog .east { transform: rotate(-90deg); }
.dialog .west { transform: rotate(90deg); }

.dialog-title {
	display: flex;
	align-items: center;
	gap: 5px;
	height: 34px;
	padding: 0 13px 0 8px;
}

.dialog-title h2 {
	flex: 1;
	font-size: 13px;
	font-weight: normal;
}

.dialog-nav {
	display: flex;
	align-items: center;
	height: 40px;
	padding: 0 11px 2px 13px;
}

.dialog-nav > button {
	margin-right: 20px;
}

.dialog-nav > button:nth-of-type(3) {
	margin: 0 13px 0 -6px;
}

.dialog-nav > button:nth-of-type(4) {
	margin-right: 9px;
}

.dialog-nav button {
	display: flex;
	align-items: center;
	justify-content: center;
}

.address {
	flex: 1;
	display: flex;
	align-items: center;
	gap: 8px;
	height: 24px;
	padding-left: 3px;
	border: 1px solid #d4d4d4;
}

.address a {
	color: #222222;
	text-decoration: none;
	white-space: nowrap;
}

.history {
	margin-left: auto;
}

.refresh {
	width: 22px;
	height: 22px;
	border-left: 1px solid #d4d4d4;
}

.search {
	display: flex;
	align-items: center;
	width: 234px;
	height: 26px;
	margin-left: 11px;
	padding: 0 10px 0 9px;
	border: 1px solid #d4d4d4;
}

.search input {
	flex: 1;
	min-width: 0;
}

.search input::placeholder {
	color: #777777;
}

.dialog-bar {
	display: flex;
	align-items: center;
	height: 36px;
	padding: 0 17px 0 20px;
	border-bottom: 1px solid #e6e6e6;
	background: #f4f5f7;
	color: #2c4a6c;
}

.dialog-bar button {
	display: flex;
	align-items: center;
}

.dialog .caret {
	margin-left: 6px;
	border-width: 4px 4px 0;
	border-top-color: #1c3c64;
}

.new-folder {
	margin-left: 34px;
}

.view {
	gap: 6px;
	margin: 0 26px 0 auto;
}

.dialog-bar .round-help {
	justify-content: center;
	width: 18px;
	height: 18px;
	margin-left: 25px;
	border-radius: 9px;
	background: #0868c8;
	color: #ffffff;
	font-weight: bold;
}

.dialog-body {
	display: flex;
	height: 141px;
}

.places {
	flex: none;
	width: 156px;
	margin: 0;
	padding: 1px 0 0;
	overflow: hidden;
	list-style: none;
}

.places li {
	display: flex;
	align-items: center;
	gap: 5px;
	height: 27px;
	padding-left: 36px;
	white-space: nowrap;
}

.places .active {
	background: #d9d9d9;
}

.places-scroll {
	flex: none;
	display: flex;
	flex-direction: column;
	align-items: center;
	width: 18px;
	padding: 5px 0;
	background: #f0f0f0;
}

.places-scroll .bar {
	width: 18px;
	height: 27px;
	margin: auto 0 25px;
	background: #cdcdcd;
}

.files {
	position: relative;
	flex: 1;
	display: flex;
	flex-direction: column;
	min-width: 0;
	margin-left: 6px;
}

.files table {
	width: 100%;
	table-layout: fixed;
	border-spacing: 0;
}

.files th, .files td {
	height: 25px;
	padding: 0 0 0 7px;
	overflow: hidden;
	color: #777777;
	font-weight: normal;
	text-align: left;
	white-space: nowrap;
}

.files th {
	height: 30px;
	border-left: 1px solid #e6e6e6;
	color: #4c607a;
}

.files th:first-child {
	padding-left: 18px;
	border-left: 0;
}

.files tbody td:first-child {
	overflow: visible;
	position: relative;
	padding-left: 20px;
	color: #222222;
}

.files tbody::before {
	content: "";
	display: block;
	height: 6px;
}

.files .date { width: 138px; }
.files .type { width: 102px; }

.name {
	display: flex;
	align-items: center;
	gap: 6px;
}

.picked td {
	background: #cce8ff;
	box-shadow: inset 0 -1px #99d1ff, inset 0 1px #b8dfff;
}

.sort {
	position: absolute;
	left: 157px;
	top: -2px;
}

.files-scroll {
	display: flex;
	align-items: center;
	height: 18px;
	margin-top: auto;
	padding: 0 4px;
	background: #f0f0f0;
}

.files-scroll .bar {
	width: 409px;
	height: 18px;
	margin: 0 auto 0 6px;
	background: #cdcdcd;
}

.dialog-foot {
	position: relative;
	padding: 15px 18px;
	background: #f0f0f0;
}

.name-row, .button-row {
	display: flex;
	align-items: center;
	justify-content: flex-end;
}

.combo {
	position: relative;
	display: flex;
	align-items: center;
	width: 269px;
	height: 26px;
	margin-left: 5px;
	padding-right: 4px;
	border: 1px solid #888888;
	background: #ffffff;
}

.combo input, .combo select {
	flex: 1;
	min-width: 0;
	padding-left: 3px;
	appearance: none;
}

.type-combo {
	width: 218px;
	margin-left: 13px;
	border-color: #b4b4b4;
	background: #e3e3e3;
}

.button-row {
	gap: 16px;
	margin-top: 8px;
}

.button-row button {
	width: 100px;
	height: 28px;
	border: 1px solid #b4b4b4;
	background: #e1e1e1;
}

.button-row .default {
	border: 2px solid #0078d7;
}

.resize {
	position: absolute;
	right: 2px;
	bottom: 1px;
}

/* numbered callouts */

.mark {
	position: absolute;
	border: 2px solid #e01850;
}

.stem {
	position: absolute;
	background: #e81848;
}

.badge {
	position: absolute;
	z-index: 3;
	width: 38px;
	height: 30px;
	border-radius: 9px;
	background: #ec1448;
	box-shadow: 2px 3px 4px rgba(0,0,0,0.5);
	color: #ffffff;
	font: bold 14px/30px "Noto Sans", "Open Sans", sans-serif;
	text-align: center;
}

.mark-path { left: -1px; top: -2px; width: 228px; height: 24px; }
.stem-path { left: 100px; top: -27px; width: 3px; height: 26px; }
.badge-path { left: 82px; top: -56px; }

.mark-pick { right: -4px; top: -4px; width: 24px; height: 28px; }
.stem-pick { right: 19px; top: 10px; width: 32px; height: 3px; }
.badge-pick { right: 50px; top: -3px; }

.mark-row { left: 13px; top: -1px; width: 127px; height: 28px; }
.stem-row { left: 118px; top: 26px; width: 3px; height: 42px; }
.badge-row { left: 100px; top: 66px; }
```
